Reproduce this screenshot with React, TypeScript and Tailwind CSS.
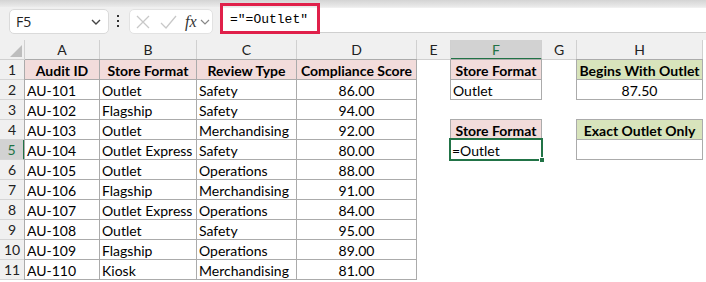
import React from 'react';

type Cell = { text?: string; fill?: 'pink' | 'green' | 'white'; bold?: boolean; align?: 'left' | 'center'; selected?: boolean };

const colLetters = ['A', 'B', 'C', 'D', 'E', 'F', 'G', 'H'];

const audits = [
  ['AU-101', 'Outlet', 'Safety', '86.00'],
  ['AU-102', 'Flagship', 'Safety', '94.00'],
  ['AU-103', 'Outlet', 'Merchandising', '92.00'],
  ['AU-104', 'Outlet Express', 'Safety', '80.00'],
  ['AU-105', 'Outlet', 'Operations', '88.00'],
  ['AU-106', 'Flagship', 'Merchandising', '91.00'],
  ['AU-107', 'Outlet Express', 'Operations', '84.00'],
  ['AU-108', 'Outlet', 'Safety', '95.00'],
  ['AU-109', 'Flagship', 'Operations', '89.00'],
  ['AU-110', 'Kiosk', 'Merchandising', '81.00'],
];

// sheet cells keyed by "row-col" (col index 0 = A)
const cells: Record<string, Cell> = {};
['Audit ID', 'Store Format', 'Review Type', 'Compliance Score'].forEach((t, c) => {
  cells[`1-${c}`] = { text: t, fill: 'pink', bold: true, align: 'center' };
});
audits.forEach((r, i) => {
  r.forEach((t, c) => {
    cells[`${i + 2}-${c}`] = { text: t, fill: 'white', align: c === 3 ? 'center' : 'left' };
  });
});
cells['1-5'] = { text: 'Store Format', fill: 'pink', bold: true, align: 'center' };
cells['2-5'] = { text: 'Outlet', fill: 'white', align: 'left' };
cells['1-7'] = { text: 'Begins With Outlet', fill: 'green', bold: true, align: 'center' };
cells['2-7'] = { text: '87.50', fill: 'white', align: 'center' };
cells['4-5'] = { text: 'Store Format', fill: 'pink', bold: true, align: 'center' };
cells['5-5'] = { text: '=Outlet', fill: 'white', align: 'left', selected: true };
cells['4-7'] = { text: 'Exact Outlet Only', fill: 'green', bold: true, align: 'center' };
cells['5-7'] = { text: '', fill: 'white', align: 'center' };

const SheetCell: React.FC<{ cell?: Cell }> = ({ cell }) => {
  if (!cell) return <div className="h-[20px]" />;
  const bg = cell.fill === 'pink' ? 'bg-[#f2dcdb]' : cell.fill === 'green' ? 'bg-[#d8e4bc]' : 'bg-white';
  const justify = cell.align === 'center' ? 'justify-center' : 'justify-start';
  if (cell.selected) {
    return (
      <div className={`relative z-10 -ml-[2px] -mt-[2px] -mr-px -mb-px flex items-center border-2 border-[#217346] bg-white px-[1px] ${justify}`}>
        <span className="pt-[1px]">{cell.text}</span>
        <div className="absolute -right-[4px] -bottom-[4px] h-[6px] w-[6px] border border-white bg-[#217346]" />
      </div>
    );
  }
  return (
    <div className={`-ml-px -mt-px flex items-center overflow-hidden whitespace-nowrap border border-[#ababab] px-[2px] pt-[1px] ${bg} ${justify} ${cell.bold ? 'font-bold' : ''}`}>
      {cell.text}
    </div>
  );
};

const Toolbar: React.FC = () => (
  <div className="h-[40px] bg-[#f0f0f0]">
    <div className="h-[7px] bg-gradient-to-b from-[#d4d4d4] to-[#ebebeb]" />
    <div className="flex items-start">
      <div className="ml-[9px] mt-[2px] flex h-[25px] w-[100px] items-center justify-between rounded-[5px] border border-[#dadada] bg-white pl-[6px] pr-[6px]">
        <span className="text-[14px] text-[#222]" style={{ fontFamily: '"Open Sans", sans-serif' }}>F5</span>
        <svg width="12" height="8" viewBox="0 0 12 8" fill="none" stroke="#444" strokeWidth="1.4">
          <path d="M2 2l4 4 4-4" />
        </svg>
      </div>
      <div className="ml-[8px] mt-[8px] flex flex-col gap-[3px]">
        <div className="h-[2px] w-[2px] bg-[#333]" />
        <div className="h-[2px] w-[2px] bg-[#333]" />
        <div className="h-[2px] w-[2px] bg-[#333]" />
      </div>
      <div className="ml-[10px] mt-[2px] flex h-[25px] w-[84px] items-center rounded-[5px] border border-[#e2e2e2] bg-white pl-[4px]">
        <svg width="18" height="18" viewBox="0 0 18 18" fill="none" stroke="#c8c8c8" strokeWidth="1.3">
          <path d="M3 3l12 12M15 3L3 15" />
        </svg>
        <svg className="ml-[7px]" width="18" height="18" viewBox="0 0 18 18" fill="none" stroke="#c8c8c8" strokeWidth="1.3">
          <path d="M2 10l5 5 10-12" />
        </svg>
        <span className="ml-[8px] text-[16px] italic text-[#333]" style={{ fontFamily: '"Liberation Serif", serif' }}>fx</span>
        <svg className="ml-[3px]" width="10" height="8" viewBox="0 0 10 8" fill="none" stroke="#888" strokeWidth="1.2">
          <path d="M1 2l4 4 4-4" />
        </svg>
      </div>
      <div className="ml-[7px] mt-[1px] flex h-[25px] flex-1 items-center border-b border-[#cfcfcf] bg-white">
        <div className="relative ml-[10px] text-[13px] text-black" style={{ fontFamily: '"Liberation Mono", monospace' }}>
          ="=Outlet"
          <div className="absolute -left-[10px] -top-[7px] h-[31px] w-[100px] border-[3px] border-[#e0204a]" />
        </div>
      </div>
    </div>
  </div>
);

export default function App() {
  const rows = Array.from({ length: 11 }, (_, i) => i + 1);
  return (
    <div className="h-[282px] w-[706px] overflow-hidden bg-white text-[14px] text-black" style={{ fontFamily: 'Lato, "Liberation Sans", sans-serif' }}>
      <Toolbar />
      <div className="grid grid-cols-[25px_75px_97px_100px_120px_34px_91px_35px_126px] grid-rows-[20px] auto-rows-[20px]">
        <div className="relative border-r border-b border-[#d0d0d0] bg-[#f0f0f0]">
          <svg className="absolute right-[2px] bottom-[2px]" width="12" height="12" viewBox="0 0 12 12">
            <path d="M12 0V12H0z" fill="#bdbdbd" />
          </svg>
        </div>
        {colLetters.map((l) =>
          l === 'F' ? (
            <div key={l} className="flex items-center justify-center border-r border-b-2 border-r-[#d0d0d0] border-b-[#217346] bg-[#d2d2d2] text-[14px] text-[#217346]">
              {l}
            </div>
          ) : (
            <div key={l} className="flex items-center justify-center border-r border-b border-[#d0d0d0] bg-[#f0f0f0] text-[14px] text-[#222]">
              {l}
            </div>
          )
        )}
        {rows.map((r) => (
          <React.Fragment key={r}>
            {r === 5 ? (
              <div className="flex items-center justify-center border-r-2 border-b border-r-[#217346] border-b-[#d5d5d5] bg-[#d2d2d2] text-[14px] text-[#217346]">
                {r}
              </div>
            ) : (
              <div className="flex items-center justify-center border-r border-b border-[#d5d5d5] bg-[#f0f0f0] text-[14px] text-[#222]">
                {r}
              </div>
            )}
            {colLetters.map((_, c) => (
              <SheetCell key={c} cell={cells[`${r}-${c}`]} />
            ))}
          </React.Fragment>
        ))}
      </div>
    </div>
  );
}
